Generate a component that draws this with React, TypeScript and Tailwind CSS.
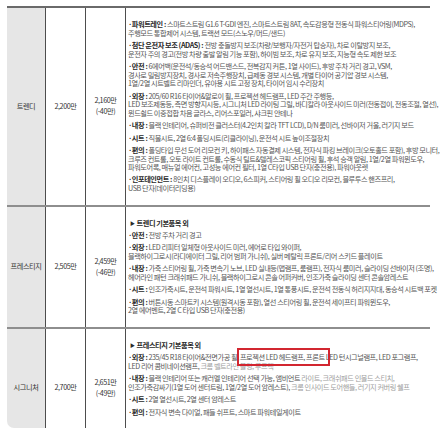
import React from "react";

type Item = { label: string; lines: React.ReactNode[] };
type Row = {
  name: string;
  price: string;
  sale: string;
  diff: string;
  heading?: string;
  items: Item[];
  last?: boolean;
};

const Faded = ({ children }: { children: React.ReactNode }) => (
  <span className="text-[#a0a0a0]">{children}</span>
);

const rows: Row[] = [
  {
    name: "트렌디",
    price: "2,200만",
    sale: "2,160만",
    diff: "(-40만)",
    items: [
      {
        label: "파워트레인",
        lines: [
          "스마트스트림 G1.6 T-GDI 엔진, 스마트스트림 8AT, 속도감응형 전동식 파워스티어링(MDPS),",
          "주행모드 통합제어 시스템, 트랙션 모드(스노우/머드/샌드)",
        ],
      },
      {
        label: "첨단 운전자 보조 (ADAS)",
        lines: [
          "전방 충돌방지 보조(차량/보행자/자전거 탑승자), 차로 이탈방지 보조,",
          "운전자 주의 경고(전방 차량 출발 알림 기능 포함), 하이빔 보조, 차로 유지 보조, 지능형 속도 제한 보조",
        ],
      },
      {
        label: "안전",
        lines: [
          "6에어백(운전석/동승석 어드밴스드, 전복감지 커튼, 1열 사이드), 후방 주차 거리 경고, VSM,",
          "경사로 밀림방지장치, 경사로 저속주행장치, 급제동 경보 시스템, 개별 타이어 공기압 경보 시스템,",
          "1열/2열 시트벨트 리마인더, 유아용 시트 고정 장치, 타이어 임시 수리장치",
        ],
      },
      {
        label: "외장",
        lines: [
          "205/60 R16 타이어&알로이 휠, 프로젝션 헤드램프, LED 주간 주행등,",
          "LED 보조제동등, 측면 방향지시등, 시그니처 LED 라이팅 그릴, 바디칼라 아웃사이드 미러(전동접이, 전동조절, 열선),",
          "윈드쉴드 이중접합 차음 글라스, 리어스포일러, 샤크핀 안테나",
        ],
      },
      {
        label: "내장",
        lines: [
          "블랙 인테리어, 슈퍼비전 클러스터(4.2인치 칼라 TFT LCD), D/N 룸미러, 선바이저 거울, 러기지 보드",
        ],
      },
      {
        label: "시트",
        lines: ["직물시트, 2열 6:4 폴딩시트(리클라이닝), 운전석 시트 높이조절장치"],
      },
      {
        label: "편의",
        lines: [
          "폴딩타입 무선 도어 리모컨 키, 하이패스 자동결제 시스템, 전자식 파킹 브레이크(오토홀드 포함), 후방 모니터,",
          "크루즈 컨트롤, 오토 라이트 컨트롤, 수동식 틸트&텔레스코픽 스티어링 휠, 후석 승객 알림, 1열/2열 파워윈도우,",
          "파워도어록, 매뉴얼 에어컨, 고성능 에어컨 필터, 1열 C타입 USB 단자(충전용), 파워아웃렛",
        ],
      },
      {
        label: "인포테인먼트",
        lines: [
          "8인치 디스플레이 오디오, 6스피커, 스티어링 휠 오디오 리모컨, 블루투스 핸즈프리,",
          "USB 단자(데이터리딩용)",
        ],
      },
    ],
  },
  {
    name: "프레스티지",
    price: "2,505만",
    sale: "2,459만",
    diff: "(-46만)",
    heading: "트렌디 기본품목 외",
    items: [
      { label: "안전", lines: ["전방 주차 거리 경고"] },
      {
        label: "외장",
        lines: [
          "LED 리피터 일체형 아웃사이드 미러, 에어로 타입 와이퍼,",
          "블랙하이그로시(라디에이터 그릴, 리어 범퍼 가니쉬), 실버 메탈릭 프론트/리어 스키드 플레이트",
        ],
      },
      {
        label: "내장",
        lines: [
          "가죽 스티어링 휠, 가죽 변속기 노브, LED 실내등(맵램프, 룸램프), 전자식 룸미러, 슬라이딩 선바이저 (조명),",
          "헤어라인 패턴 크래쉬패드 가니쉬, 블랙하이그로시 콘솔 어퍼커버, 인조가죽 슬라이딩 센터 콘솔암레스트",
        ],
      },
      {
        label: "시트",
        lines: [
          "인조가죽시트, 운전석 파워시트, 1열 열선시트, 1열 통풍시트, 운전석 전동식 허리지지대, 동승석 시트백 포켓",
        ],
      },
      {
        label: "편의",
        lines: [
          "버튼시동 스마트키 시스템(원격시동 포함), 열선 스티어링 휠, 운전석 세이프티 파워윈도우,",
          "2열 에어벤트, 2열 C 타입 USB 단자(충전용)",
        ],
      },
    ],
  },
  {
    name: "시그니처",
    price: "2,700만",
    sale: "2,651만",
    diff: "(-49만)",
    heading: "프레스티지 기본품목 외",
    last: true,
    items: [
      {
        label: "외장",
        lines: [
          <>
            235/45 R18 타이어&전면가공 휠,{" "}
            <span className="relative">
              프로젝션 LED 헤드램프, 프론트
              <span className="absolute -left-[3px] -right-[5px] -top-[4px] -bottom-[4px] border-2 border-[#d22630]" />
            </span>{" "}
            LED 턴시그널램프, LED 포그램프,
          </>,
          <>
            LED 리어 콤비네이션램프, <Faded>크롬 벨트라인 몰딩, 루프랙</Faded>
          </>,
        ],
      },
      {
        label: "내장",
        lines: [
          <>
            블랙 인테리어 또는 캐러멜 인테리어 선택 가능, 앰비언트 <Faded>라이트, 크래쉬패드 인몰드 스티치,</Faded>
          </>,
          <>
            인조가죽감싸기(1열 도어 센터트림, 1열/2열 도어 암레스트), <Faded>크롬 인사이드 도어핸들, 러기지 커버링 쉘프</Faded>
          </>,
        ],
      },
      { label: "시트", lines: ["2열 열선시트, 2열 센터 암레스트"] },
      { label: "편의", lines: ["전자식 변속 다이얼, 패들 쉬프트, 스마트 파워테일게이트"] },
    ],
  },
];

function Bullet({ item }: { item: Item }) {
  return (
    <div>
      {item.lines.map((l, i) => (
        <div key={i} className="whitespace-nowrap">
          {i === 0 && <span className="font-bold text-[#2a2a2a]">·{item.label} : </span>}
          {l}
        </div>
      ))}
    </div>
  );
}

function TableRow({ row, first }: { row: Row; first: boolean }) {
  return (
    <div
      className={
        first
          ? "grid grid-cols-[38px_40px_40px_305px]"
          : "grid grid-cols-[38px_40px_40px_305px] border-t-2 border-[#8e8e8e]"
      }
    >
      <div
        className={
          row.last
            ? "flex items-center justify-center bg-[#e6e6e6] rounded-bl-[7px] pt-[18px] text-[7.2px] tracking-[-0.4px] text-[#333]"
            : "flex items-center justify-center bg-[#e6e6e6] text-[7.2px] tracking-[-0.4px] text-[#333]"
        }
      >
        {row.name}
      </div>
      <div
        className={
          row.last
            ? "flex items-center justify-center border-l border-[#4d4d4d] pt-[18px] text-[7.2px] tracking-[-0.4px] text-[#333]"
            : "flex items-center justify-center border-l border-[#4d4d4d] text-[7.2px] tracking-[-0.4px] text-[#333]"
        }
      >
        {row.price}
      </div>
      <div
        className={
          row.last
            ? "flex flex-col items-center justify-center border-l border-[#4d4d4d] pt-[18px] text-[7.2px] leading-[11px] tracking-[-0.4px] text-[#333]"
            : "flex flex-col items-center justify-center border-l border-[#4d4d4d] text-[7.2px] leading-[11px] tracking-[-0.4px] text-[#333]"
        }
      >
        <div>{row.sale}</div>
        <div>{row.diff}</div>
      </div>
      <div className="flex flex-col gap-[3.8px] border-l border-[#4d4d4d] py-[12px] pl-[2px] text-[7.2px] leading-[8.6px] tracking-[-0.44px] text-[#555]">
        {row.heading && (
          <div className="flex items-center gap-[2px] whitespace-nowrap pl-[2px] font-bold text-[#2a2a2a]">
            <span className="text-[5px]">▶</span>
            <span>{row.heading}</span>
          </div>
        )}
        {row.items.map((it, i) => (
          <Bullet key={i} item={it} />
        ))}
      </div>
    </div>
  );
}

export default function App() {
  return (
    <div className="h-[435px] w-[440px] overflow-hidden bg-white font-['Noto_Sans_CJK_KR',sans-serif]">
      <div className="ml-[7px] mt-[6px] w-[423px] border-t-2 border-[#6a6a6a]">
        {rows.map((r, i) => (
          <TableRow key={i} row={r} first={i === 0} />
        ))}
      </div>
    </div>
  );
}
